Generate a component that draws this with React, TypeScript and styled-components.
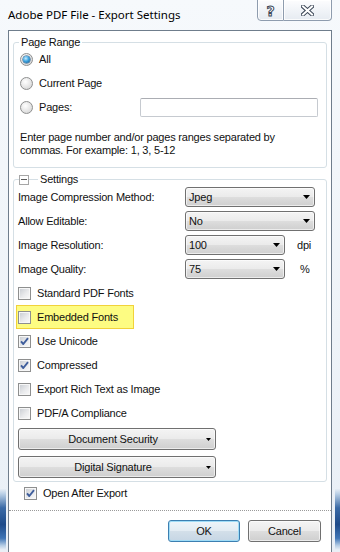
import React from "react";
import styled, { createGlobalStyle, css } from "styled-components";

const GlobalStyle = createGlobalStyle`
  html, body {
    margin: 0;
    padding: 0;
  }
  body {
    background: #fff;
  }
`;

const sideGlow = `linear-gradient(180deg, transparent 88.5%, #b9cfe6 89.5%, #3a6aa6 92%, #1c4a8a 95%, #3f75b6 97.5%, #b3cbe4 98.8%, transparent 99.6%)`;

const Window = styled.div`
  box-sizing: border-box;
  width: 340px;
  height: 552px;
  overflow: hidden;
  display: flex;
  flex-direction: column;
  padding: 0 8px;
  background: ${sideGlow} left / 6px 100% no-repeat,
    ${sideGlow} right / 5px 100% no-repeat,
    linear-gradient(180deg, #f6f9fc 0%, #eef3f8 60%, #e9eff6 100%);
  font-family: "Liberation Sans", Arial, sans-serif;
  font-size: 11px;
  letter-spacing: -0.2px;
  color: #111;
`;

const TitleBar = styled.div`
  height: 30px;
  flex: none;
  display: flex;
  align-items: flex-start;
`;

const Title = styled.div`
  padding-top: 7px;
  font-family: "Noto Sans", "Open Sans", sans-serif;
  font-size: 11.5px;
  line-height: 16px;
  letter-spacing: 0;
  color: #000;
`;

const CaptionButtons = styled.div`
  margin-left: auto;
  margin-top: -1px;
  display: flex;
  height: 22px;
`;

const CaptionButton = styled.div<{ $w: number; $first?: boolean }>`
  box-sizing: border-box;
  width: ${(p) => p.$w}px;
  height: 100%;
  display: flex;
  align-items: center;
  justify-content: center;
  border: 1px solid #8e9cae;
  background: linear-gradient(180deg, #fdfdfe 0%, #f1f4f8 50%, #e6ebf1 100%);
  box-shadow: inset 0 0 0 1px rgba(255, 255, 255, 0.8);
  ${(p) =>
    p.$first
      ? css`
          border-radius: 0 0 0 4px;
        `
      : css`
          border-left: none;
          border-radius: 0 0 4px 0;
        `}
`;

const HelpGlyph = styled.span`
  font-family: "DejaVu Sans", sans-serif;
  font-weight: bold;
  font-size: 14px;
  line-height: 14px;
  color: #fff;
  -webkit-text-stroke: 1px #3d4858;
  margin-top: 1px;
`;

const Client = styled.div`
  flex: 1;
  display: flex;
  flex-direction: column;
  background: #fff;
  border: 1px solid #6f7d8c;
  border-bottom: none;
  padding: 0 4px;
`;

const GroupBox = styled.div<{ $mt: number; $pad: string }>`
  position: relative;
  margin-top: ${(p) => p.$mt}px;
  border: 1px solid #d5dfe5;
  border-radius: 3px;
  padding: ${(p) => p.$pad};
`;

const Legend = styled.div`
  position: absolute;
  top: -7px;
  left: 5px;
  height: 13px;
  display: flex;
  align-items: center;
  line-height: 13px;
`;

const LegendText = styled.span`
  background: #fff;
  padding: 0 2px;
`;

const ExpandBox = styled.span`
  box-sizing: border-box;
  width: 10px;
  height: 10px;
  border: 1px solid #a6a6a6;
  background: #fff;
  display: flex;
  align-items: center;
  justify-content: center;
  margin-right: 9px;

  &::before {
    content: "";
    width: 6px;
    height: 1px;
    background: #5b5b5b;
  }
`;

const OptionRow = styled.div`
  height: 24px;
  display: flex;
  align-items: center;
  gap: 6px;
`;

const Radio = styled.span<{ $on?: boolean }>`
  position: relative;
  box-sizing: border-box;
  flex: none;
  width: 13px;
  height: 13px;
  border-radius: 50%;
  border: 1px solid #8e8f8f;
  background: radial-gradient(circle at 40% 35%, #ffffff 0%, #eaeaea 45%, #cdcdcd 100%);

  ${(p) =>
    p.$on &&
    css`
      &::after {
        content: "";
        position: absolute;
        inset: 2px;
        border-radius: 50%;
        background: radial-gradient(circle at 40% 35%, #c8ecff 0%, #3fa5e0 45%, #0b4f86 100%);
        box-shadow: 0 0 0 0.5px #1a4f7d;
      }
    `}
`;

const TextInput = styled.div`
  box-sizing: border-box;
  margin-left: auto;
  width: 178px;
  height: 19px;
  border: 1px solid #c6cad0;
  border-top-color: #abadb3;
  border-radius: 2px;
  background: #fff;
`;

const Help = styled.p`
  margin: 12px 0 0;
  line-height: 13px;
`;

const SettingRow = styled.div`
  height: 24px;
  display: flex;
  align-items: center;
`;

const SettingLabel = styled.span`
  flex: none;
  width: 167px;
`;

const Unit = styled.span<{ $ml: number }>`
  margin-left: ${(p) => p.$ml}px;
`;

const Combo = styled.div<{ $w: number }>`
  box-sizing: border-box;
  flex: none;
  width: ${(p) => p.$w}px;
  height: 20px;
  display: flex;
  align-items: center;
  justify-content: space-between;
  padding: 0 4px 0 3px;
  border: 1px solid #707070;
  border-radius: 3px;
  background: linear-gradient(180deg, #f4f4f4 0%, #ebebeb 48%, #dddddd 52%, #cfcfcf 100%);
  box-shadow: inset 0 0 0 1px rgba(255, 255, 255, 0.6);
`;

const Check = styled.span`
  box-sizing: border-box;
  flex: none;
  width: 13px;
  height: 13px;
  display: flex;
  align-items: center;
  justify-content: center;
  border: 1px solid #8e8f8f;
  background: linear-gradient(135deg, #c6cad0 0%, #e9eaec 55%, #fbfbfb 100%);
  box-shadow: inset 0 0 0 1px #f7f7f7;
`;

const CheckRow = styled.div<{ $mark?: boolean; $ml?: number; $h?: number }>`
  box-sizing: border-box;
  height: ${(p) => p.$h ?? 24}px;
  display: flex;
  align-items: center;
  gap: 6px;
  margin-left: ${(p) => p.$ml ?? 0}px;

  ${(p) =>
    p.$mark &&
    css`
      width: 118px;
      margin-left: -2px;
      padding-left: 1px;
      background: #fdfc82;
      border: 1px solid #f1d23a;
    `}
`;

const DropButton = styled.div<{ $mt: number }>`
  box-sizing: border-box;
  width: 198px;
  height: 22px;
  margin-top: ${(p) => p.$mt}px;
  display: flex;
  align-items: center;
  padding: 0 4px 0 1px;
  border: 1px solid #707070;
  border-radius: 3px;
  background: linear-gradient(180deg, #f4f4f4 0%, #ebebeb 48%, #dddddd 52%, #cfcfcf 100%);
  box-shadow: inset 0 0 0 1px rgba(255, 255, 255, 0.6);
`;

const DropLabel = styled.span`
  flex: 1;
  text-align: center;
`;

const Separator = styled.div`
  margin: 6px -4px 0;
  border-top: 1px dotted #9a9a9a;
`;

const ButtonRow = styled.div`
  display: flex;
  justify-content: flex-end;
  gap: 8px;
  margin-top: 9px;
  padding-right: 6px;
`;

const PushButton = styled.div<{ $w: number; $default?: boolean }>`
  box-sizing: border-box;
  width: ${(p) => p.$w}px;
  height: 22px;
  display: flex;
  align-items: center;
  justify-content: center;
  border: 1px solid #707070;
  border-radius: 3px;
  background: linear-gradient(180deg, #f4f4f4 0%, #ebebeb 48%, #dddddd 52%, #cfcfcf 100%);
  box-shadow: inset 0 0 0 1px rgba(255, 255, 255, 0.6);

  ${(p) =>
    p.$default &&
    css`
      border-color: #3c7fb1;
      background: linear-gradient(180deg, #eef5fa 0%, #e3ecf3 48%, #d3dfe9 52%, #c6d6e4 100%);
      box-shadow: inset 0 0 0 1px #9fdcf7;
    `}
`;

const Arrow = ({ w = 7, h = 4 }: { w?: number; h?: number }) => (
  <svg width={w} height={h} viewBox={`0 0 ${w} ${h}`} style={{ flex: "none" }}>
    <polygon points={`0,0 ${w},0 ${w / 2},${h}`} fill="#000" />
  </svg>
);

const CheckMark = () => (
  <svg width="11" height="11" viewBox="0 0 11 11">
    <path
      d="M2 5.4 L4.3 8 L9 2.2"
      fill="none"
      stroke="#3f5e9c"
      strokeWidth="1.9"
      strokeLinejoin="round"
    />
  </svg>
);

const CloseGlyph = () => (
  <svg width="13" height="11" viewBox="0 0 13 11">
    <path d="M2 1.5 L11 9.5 M11 1.5 L2 9.5" stroke="#3d4858" strokeWidth="4" strokeLinecap="square" />
    <path d="M2 1.5 L11 9.5 M11 1.5 L2 9.5" stroke="#fff" strokeWidth="2" strokeLinecap="square" />
  </svg>
);

const CheckBox = ({ on }: { on?: boolean }) => <Check>{on && <CheckMark />}</Check>;

const settings = [
  { label: "Image Compression Method:", value: "Jpeg", w: 130 },
  { label: "Allow Editable:", value: "No", w: 130 },
  { label: "Image Resolution:", value: "100", w: 100, unit: "dpi", ml: 12 },
  { label: "Image Quality:", value: "75", w: 100, unit: "%", ml: 15 },
];

const fontOptions = [
  { label: "Standard PDF Fonts", on: false },
  { label: "Embedded Fonts", on: false, mark: true },
  { label: "Use Unicode", on: true },
  { label: "Compressed", on: true },
  { label: "Export Rich Text as Image", on: false },
  { label: "PDF/A Compliance", on: false },
];

export default function App() {
  return (
    <>
      <GlobalStyle />
      <Window>
        <TitleBar>
          <Title>Adobe PDF File - Export Settings</Title>
          <CaptionButtons>
            <CaptionButton $w={27} $first>
              <HelpGlyph>?</HelpGlyph>
            </CaptionButton>
            <CaptionButton $w={48}>
              <CloseGlyph />
            </CaptionButton>
          </CaptionButtons>
        </TitleBar>

        <Client>
          <GroupBox $mt={11} $pad="4px 8px 10px 6px">
            <Legend>
              <LegendText>Page Range</LegendText>
            </Legend>
            <OptionRow>
              <Radio $on />
              <span>All</span>
            </OptionRow>
            <OptionRow>
              <Radio />
              <span>Current Page</span>
            </OptionRow>
            <OptionRow>
              <Radio />
              <span>Pages:</span>
              <TextInput />
            </OptionRow>
            <Help>
              Enter page number and/or pages ranges separated by
              <br />
              commas. For example: 1, 3, 5-12
            </Help>
          </GroupBox>

          <GroupBox $mt={11} $pad="5px 8px 3px 4px">
            <Legend>
              <ExpandBox />
              <LegendText>Settings</LegendText>
            </Legend>
            {settings.map((s) => (
              <SettingRow key={s.label}>
                <SettingLabel>{s.label}</SettingLabel>
                <Combo $w={s.w}>
                  <span>{s.value}</span>
                  <Arrow />
                </Combo>
                {s.unit && <Unit $ml={s.ml}>{s.unit}</Unit>}
              </SettingRow>
            ))}
            {fontOptions.map((o) => (
              <CheckRow key={o.label} $mark={o.mark}>
                <CheckBox on={o.on} />
                <span>{o.label}</span>
              </CheckRow>
            ))}
            <DropButton $mt={3}>
              <DropLabel>Document Security</DropLabel>
              <Arrow w={5} h={3} />
            </DropButton>
            <DropButton $mt={6}>
              <DropLabel>Digital Signature</DropLabel>
              <Arrow w={5} h={3} />
            </DropButton>
          </GroupBox>

          <CheckRow $ml={11} $h={22}>
            <CheckBox on />
            <span>Open After Export</span>
          </CheckRow>
          <Separator />
          <ButtonRow>
            <PushButton $w={72} $default>
              OK
            </PushButton>
            <PushButton $w={73}>Cancel</PushButton>
          </ButtonRow>
        </Client>
      </Window>
    </>
  );
}
